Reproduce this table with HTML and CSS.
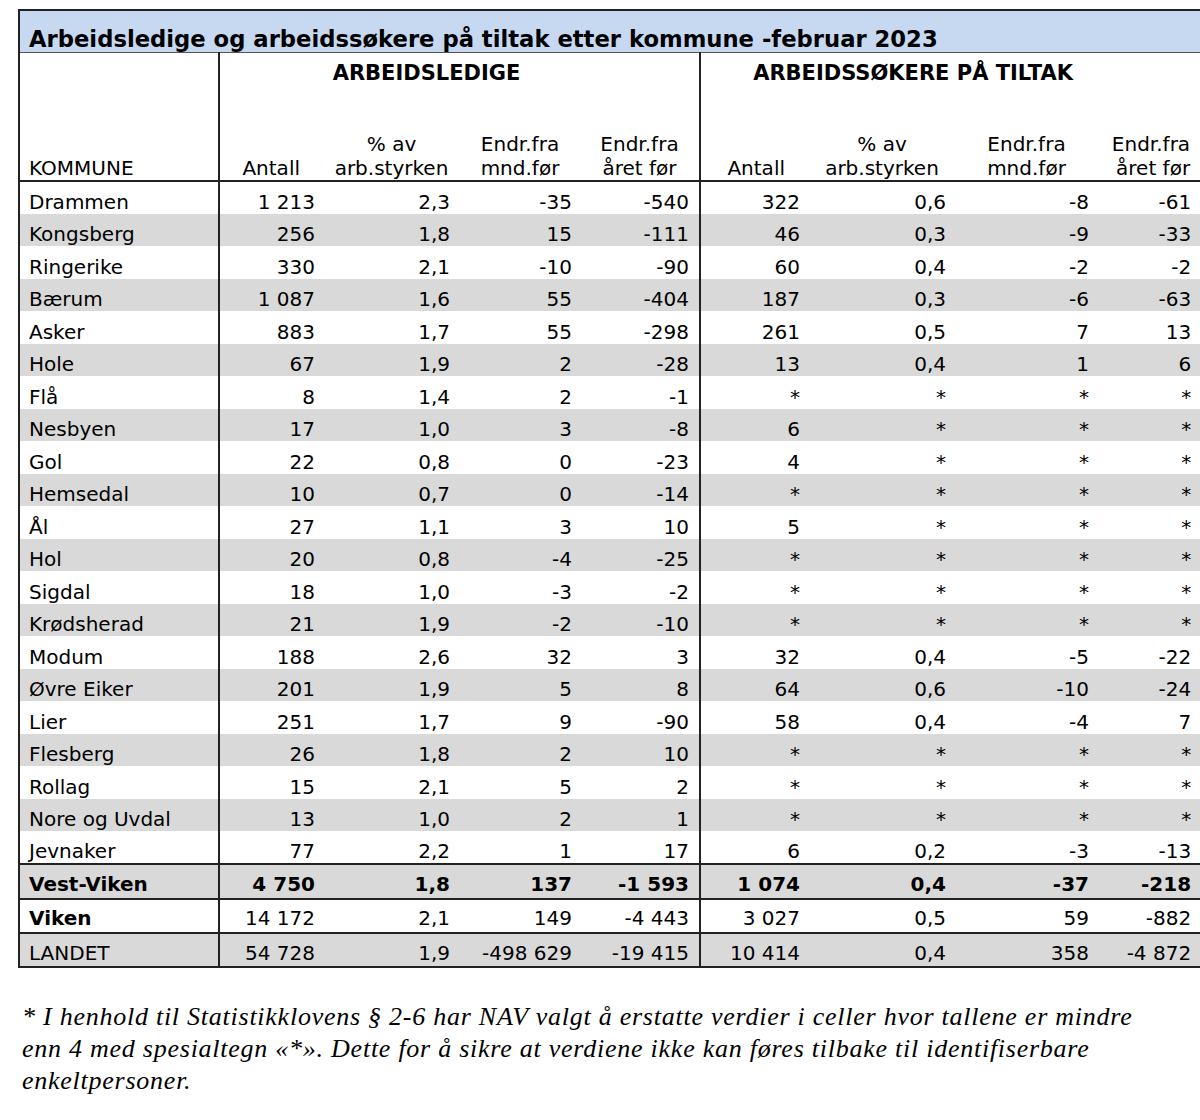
FILE: index.html
```html
<!DOCTYPE html>
<html lang="no">
<head>
<meta charset="utf-8">
<title>Arbeidsledige og arbeidssøkere på tiltak etter kommune -februar 2023</title>
<link rel="stylesheet" href="styles.css">
</head>
<body>
<div class="page">
<table class="stat">
<colgroup>
<col class="w-name"><col class="w-a1"><col class="w-a2"><col class="w-a3"><col class="w-a4">
<col class="w-b1"><col class="w-b2"><col class="w-b3"><col class="w-b4">
</colgroup>
<thead>
<tr class="title-row"><th colspan="9">Arbeidsledige og arbeidssøkere på tiltak etter kommune -februar 2023</th></tr>
<tr class="group-row">
<th class="name-head" rowspan="2">KOMMUNE</th>
<th class="group g1 sep" colspan="4">ARBEIDSLEDIGE</th>
<th class="group g2 sep" colspan="4">ARBEIDSSØKERE PÅ TILTAK</th>
</tr>
<tr class="sub-row">
<th class="sep num">Antall</th>
<th class="c">% av<br>arb.styrken</th>
<th class="c">Endr.fra<br>mnd.før</th>
<th class="c">Endr.fra<br>året før</th>
<th class="sep num">Antall</th>
<th class="c">% av<br>arb.styrken</th>
<th class="c">Endr.fra<br>mnd.før</th>
<th class="last">Endr.fra<br>året før</th>
</tr>
</thead>
<tbody>
<tr><td>Drammen</td><td class="sep">1 213</td><td>2,3</td><td>-35</td><td>-540</td><td class="sep">322</td><td>0,6</td><td>-8</td><td>-61</td></tr>
<tr class="alt"><td>Kongsberg</td><td class="sep">256</td><td>1,8</td><td>15</td><td>-111</td><td class="sep">46</td><td>0,3</td><td>-9</td><td>-33</td></tr>
<tr><td>Ringerike</td><td class="sep">330</td><td>2,1</td><td>-10</td><td>-90</td><td class="sep">60</td><td>0,4</td><td>-2</td><td>-2</td></tr>
<tr class="alt"><td>Bærum</td><td class="sep">1 087</td><td>1,6</td><td>55</td><td>-404</td><td class="sep">187</td><td>0,3</td><td>-6</td><td>-63</td></tr>
<tr><td>Asker</td><td class="sep">883</td><td>1,7</td><td>55</td><td>-298</td><td class="sep">261</td><td>0,5</td><td>7</td><td>13</td></tr>
<tr class="alt"><td>Hole</td><td class="sep">67</td><td>1,9</td><td>2</td><td>-28</td><td class="sep">13</td><td>0,4</td><td>1</td><td>6</td></tr>
<tr><td>Flå</td><td class="sep">8</td><td>1,4</td><td>2</td><td>-1</td><td class="sep">*</td><td>*</td><td>*</td><td>*</td></tr>
<tr class="alt"><td>Nesbyen</td><td class="sep">17</td><td>1,0</td><td>3</td><td>-8</td><td class="sep">6</td><td>*</td><td>*</td><td>*</td></tr>
<tr><td>Gol</td><td class="sep">22</td><td>0,8</td><td>0</td><td>-23</td><td class="sep">4</td><td>*</td><td>*</td><td>*</td></tr>
<tr class="alt"><td>Hemsedal</td><td class="sep">10</td><td>0,7</td><td>0</td><td>-14</td><td class="sep">*</td><td>*</td><td>*</td><td>*</td></tr>
<tr><td>Ål</td><td class="sep">27</td><td>1,1</td><td>3</td><td>10</td><td class="sep">5</td><td>*</td><td>*</td><td>*</td></tr>
<tr class="alt"><td>Hol</td><td class="sep">20</td><td>0,8</td><td>-4</td><td>-25</td><td class="sep">*</td><td>*</td><td>*</td><td>*</td></tr>
<tr><td>Sigdal</td><td class="sep">18</td><td>1,0</td><td>-3</td><td>-2</td><td class="sep">*</td><td>*</td><td>*</td><td>*</td></tr>
<tr class="alt"><td>Krødsherad</td><td class="sep">21</td><td>1,9</td><td>-2</td><td>-10</td><td class="sep">*</td><td>*</td><td>*</td><td>*</td></tr>
<tr><td>Modum</td><td class="sep">188</td><td>2,6</td><td>32</td><td>3</td><td class="sep">32</td><td>0,4</td><td>-5</td><td>-22</td></tr>
<tr class="alt"><td>Øvre Eiker</td><td class="sep">201</td><td>1,9</td><td>5</td><td>8</td><td class="sep">64</td><td>0,6</td><td>-10</td><td>-24</td></tr>
<tr><td>Lier</td><td class="sep">251</td><td>1,7</td><td>9</td><td>-90</td><td class="sep">58</td><td>0,4</td><td>-4</td><td>7</td></tr>
<tr class="alt"><td>Flesberg</td><td class="sep">26</td><td>1,8</td><td>2</td><td>10</td><td class="sep">*</td><td>*</td><td>*</td><td>*</td></tr>
<tr><td>Rollag</td><td class="sep">15</td><td>2,1</td><td>5</td><td>2</td><td class="sep">*</td><td>*</td><td>*</td><td>*</td></tr>
<tr class="alt"><td>Nore og Uvdal</td><td class="sep">13</td><td>1,0</td><td>2</td><td>1</td><td class="sep">*</td><td>*</td><td>*</td><td>*</td></tr>
<tr><td>Jevnaker</td><td class="sep">77</td><td>2,2</td><td>1</td><td>17</td><td class="sep">6</td><td>0,2</td><td>-3</td><td>-13</td></tr>
<tr class="total region"><td>Vest-Viken</td><td class="sep">4 750</td><td>1,8</td><td>137</td><td>-1 593</td><td class="sep">1 074</td><td>0,4</td><td>-37</td><td>-218</td></tr>
<tr class="total county"><td>Viken</td><td class="sep">14 172</td><td>2,1</td><td>149</td><td>-4 443</td><td class="sep">3 027</td><td>0,5</td><td>59</td><td>-882</td></tr>
<tr class="total country"><td>LANDET</td><td class="sep">54 728</td><td>1,9</td><td>-498 629</td><td>-19 415</td><td class="sep">10 414</td><td>0,4</td><td>358</td><td>-4 872</td></tr>
</tbody>
</table>
<p class="note">* I henhold til Statistikklovens § 2-6 har NAV valgt å erstatte verdier i celler hvor tallene er mindre<br>enn 4 med spesialtegn «*». Dette for å sikre at verdiene ikke kan føres tilbake til identifiserbare<br>enkeltpersoner.</p>
</div>
</body>
</html>
```
FILE: styles.css
```css
html, body {
  margin: 0;
  padding: 0;
  background: #fff;
}
.page {
  padding: 9px 0 0 18px;
  font-family: "DejaVu Sans", Verdana, sans-serif;
  color: #000;
}
.stat {
  width: 1182px;
  table-layout: fixed;
  border-collapse: collapse;
  font-size: 20px;
  border-top: 2px solid #222;
  border-left: 2px solid #222;
  border-bottom: 2px solid #222;
}
.w-name { width: 200px; }
.w-a1 { width: 106px; }
.w-a2 { width: 135px; }
.w-a3 { width: 122px; }
.w-a4 { width: 118px; }
.w-b1 { width: 110px; }
.w-b2 { width: 146px; }
.w-b3 { width: 143px; }
.w-b4 { width: 102px; }

.stat th, .stat td {
  padding: 0 10px 0 0;
  white-space: nowrap;
}
.title-row th {
  background: #c6d9f1;
  height: 40px;
  padding: 0 0 1px 9px;
  text-align: left;
  vertical-align: bottom;
  font-size: 22.7px;
  font-weight: bold;
  line-height: 24px;
  border-bottom: 1px solid #555;
}
.group-row th {
  height: 42px;
  vertical-align: top;
  padding-top: 8px;
  font-weight: bold;
  font-size: 21px;
  line-height: 24px;
}
.group-row .g1 { padding-right: 66px; text-align: center; }
.group-row .g2 { padding-right: 76px; text-align: center; }
.group-row th.name-head {
  text-align: left;
  vertical-align: bottom;
  font-weight: normal;
  font-size: 20px;
  line-height: 24px;
  padding: 0 0 0 9px;
  border-bottom: 2px solid #222;
}
.sub-row th {
  height: 77px;
  vertical-align: bottom;
  font-weight: normal;
  line-height: 24px;
  text-align: right;
  padding-bottom: 0;
  border-bottom: 2px solid #222;
}
.sub-row th.num { padding-right: 25px; }
.sub-row th.c { text-align: center; padding: 0 2px 0 0; }
.sub-row th.last { padding-right: 11px; }
.sep { border-left: 2px solid #222; }

.stat tbody td {
  height: 32.5px;
  line-height: 24px;
  text-align: right;
  vertical-align: bottom;
  padding-bottom: 0;
  box-sizing: border-box;
}
.stat tbody td:first-child {
  text-align: left;
  padding-left: 9px;
}
.stat tbody tr.alt td { background: #d9d9d9; }

.stat tbody tr.total td {
  height: 35px;
  padding-bottom: 2px;
  border-top: 2px solid #222;
}
.stat tbody tr.region td { background: #d9d9d9; font-weight: bold; }
.stat tbody tr.county td { height: 34.5px; }
.stat tbody tr.county td:first-child { font-weight: bold; }
.stat tbody tr.country td { background: #d9d9d9; height: 34px; padding-bottom: 1px; }

.note {
  margin: 33px 0 0 4px;
  font-family: "Liberation Serif", "Times New Roman", serif;
  font-style: italic;
  font-size: 26px;
  letter-spacing: 0.75px;
  line-height: 32px;
}
```
